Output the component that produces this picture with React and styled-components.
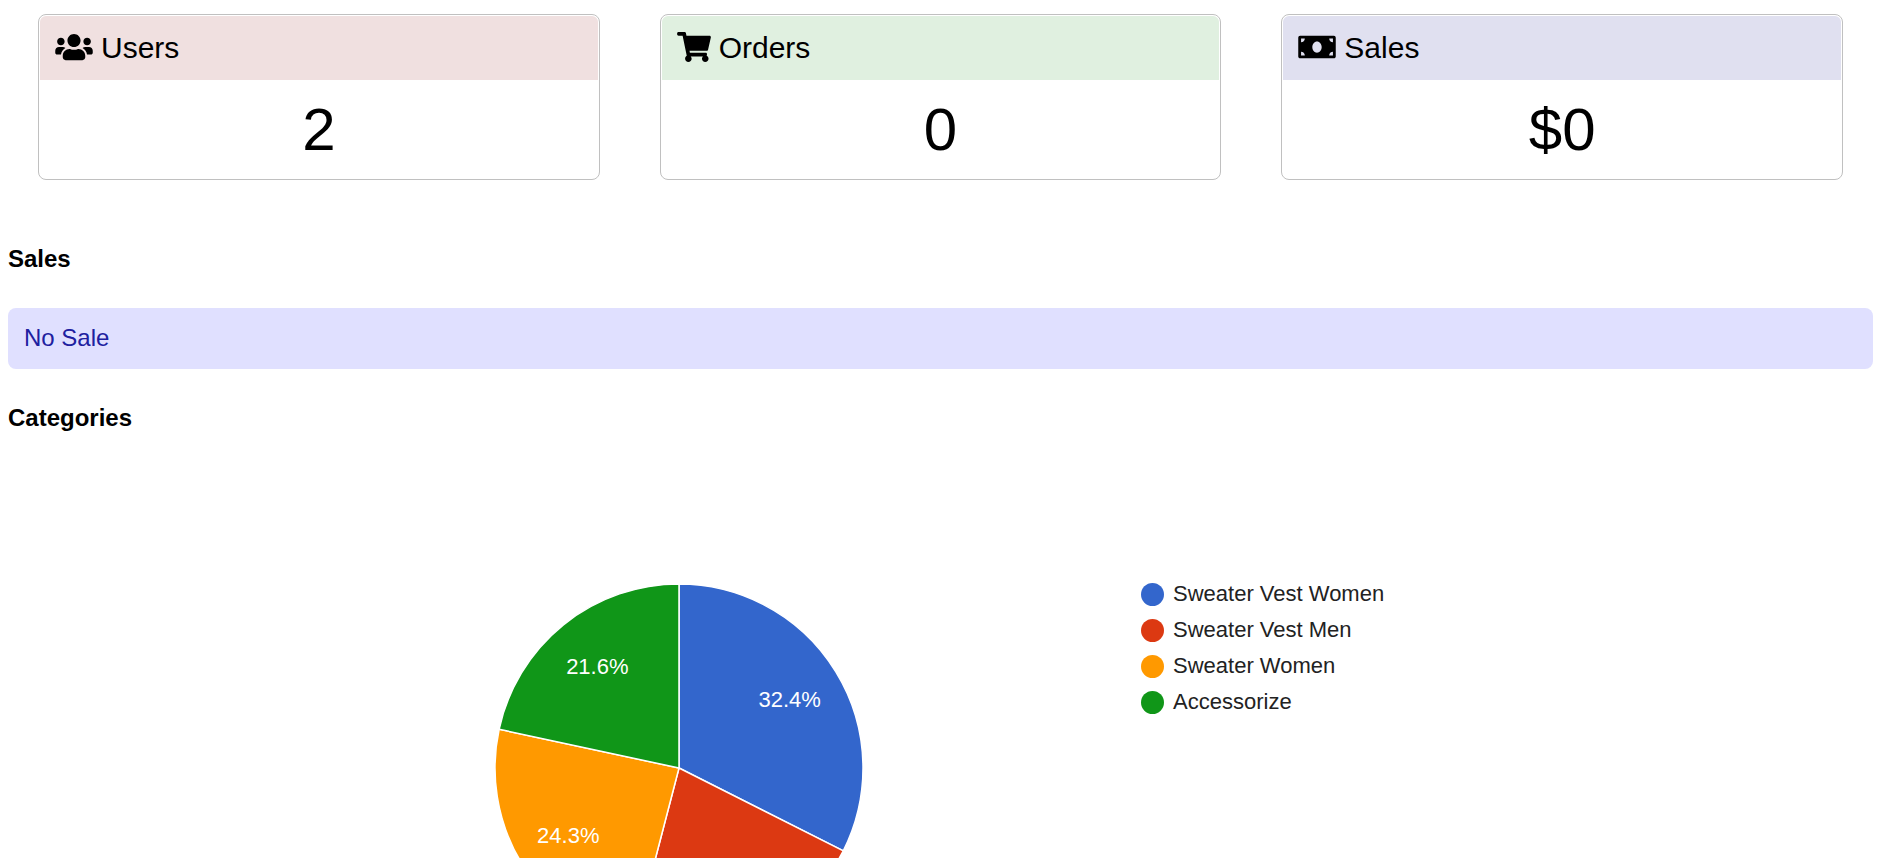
import React from 'react';
import styled, { createGlobalStyle } from 'styled-components';
import { FaUsers, FaShoppingCart, FaMoneyBill } from 'react-icons/fa';

const GlobalStyle = createGlobalStyle`
  body {
    margin: 0;
    background: #ffffff;
    color: #000000;
    font-family: "Liberation Sans", Arial, Helvetica, sans-serif;
    font-size: 24px;
  }
`;

const Dashboard = styled.main`
  padding: 14px 14px 0 8px;
`;

const Summary = styled.ul`
  display: flex;
  gap: 60px;
  margin: 0;
  padding: 0 30px 30px;
  list-style: none;
`;

const Card = styled.li`
  flex: 1;
  padding: 1px;
  border: 1px solid #c0c0c0;
  border-radius: 8px;
`;

const CardTitle = styled.div`
  display: flex;
  align-items: center;
  gap: 8px;
  padding: 15px;
  border-radius: 6px 6px 0 0;
  background: ${({ $tint }) => $tint};
  font-size: 30px;
  line-height: 34px;

  svg {
    width: ${({ $iconWidth }) => $iconWidth}px;
    height: 30px;
    margin-bottom: 2px;
  }
`;

const CardValue = styled.div`
  padding: 16px 15px 14px;
  font-size: 60px;
  line-height: 68px;
  text-align: center;
`;

const SectionTitle = styled.h2`
  margin: 35px 0;
  font-size: 24px;
  line-height: 28px;
`;

const MessageBox = styled.div`
  padding: 16px 16px 17px;
  border-radius: 8px;
  background: #e0e0ff;
  color: #2020a0;
  line-height: 28px;
`;

const Chart = styled.div`
  display: grid;
  grid-template-columns: 5fr 3fr;
  column-gap: 146px;
  padding: 115px 18% 115px 19%;
  padding-right: calc(19% - 2px);
`;

const Pie = styled.svg`
  justify-self: center;
  width: 372px;
  height: 372px;
`;

const Slice = styled.path`
  stroke: #ffffff;
  stroke-width: 1.5;
`;

const SliceLabel = styled.text`
  fill: #ffffff;
  font-size: 22px;
  text-anchor: middle;
`;

const Legend = styled.ul`
  display: flex;
  flex-direction: column;
  gap: 12px;
  margin: 0;
  padding: 0;
  list-style: none;
`;

const LegendItem = styled.li`
  display: flex;
  align-items: center;
  gap: 9px;
  color: #222222;
  font-size: 22px;
  line-height: 24px;
  white-space: nowrap;

  &::before {
    content: "";
    width: 23px;
    height: 23px;
    border-radius: 50%;
    background: ${({ $color }) => $color};
  }
`;

const cards = [
  { title: 'Users', value: '2', tint: '#f0e0e0', Icon: FaUsers, iconWidth: 38 },
  { title: 'Orders', value: '0', tint: '#e0f0e0', Icon: FaShoppingCart, iconWidth: 34 },
  { title: 'Sales', value: '$0', tint: '#e0e0f0', Icon: FaMoneyBill, iconWidth: 38 },
];

const categories = [
  { name: 'Sweater Vest Women', count: 12, color: '#3366cc' },
  { name: 'Sweater Vest Men', count: 8, color: '#dc3912' },
  { name: 'Sweater Women', count: 9, color: '#ff9900' },
  { name: 'Accessorize', count: 8, color: '#109618' },
];

const CENTER = 186;
const RADIUS = 184;
const LABEL_RADIUS = 130;

const pointAt = (fraction, radius) => {
  const angle = fraction * 2 * Math.PI;
  return [CENTER + radius * Math.sin(angle), CENTER - radius * Math.cos(angle)];
};

function PieChart({ data }) {
  const total = data.reduce((sum, item) => sum + item.count, 0);
  let passed = 0;
  const slices = data.map((item) => {
    const share = item.count / total;
    const start = pointAt(passed, RADIUS);
    const end = pointAt(passed + share, RADIUS);
    const label = pointAt(passed + share / 2, LABEL_RADIUS);
    passed += share;
    return { ...item, share, start, end, label };
  });

  return (
    <Chart>
      <Pie viewBox="0 0 372 372" role="img" aria-label="Categories">
        {slices.map(({ name, color, share, start, end }) => (
          <Slice
            key={name}
            fill={color}
            d={`M${CENTER} ${CENTER}L${start.join(' ')}A${RADIUS} ${RADIUS} 0 ${share > 0.5 ? 1 : 0} 1 ${end.join(' ')}Z`}
          />
        ))}
        {slices.map(({ name, share, label }) => (
          <SliceLabel key={name} x={label[0]} y={label[1] + 7}>
            {`${(share * 100).toFixed(1)}%`}
          </SliceLabel>
        ))}
      </Pie>
      <Legend>
        {data.map(({ name, color }) => (
          <LegendItem key={name} $color={color}>{name}</LegendItem>
        ))}
      </Legend>
    </Chart>
  );
}

export default function App() {
  return (
    <>
      <GlobalStyle />
      <Dashboard>
        <Summary>
          {cards.map(({ title, value, tint, Icon, iconWidth }) => (
            <Card key={title}>
              <CardTitle $tint={tint} $iconWidth={iconWidth}>
                <Icon aria-hidden="true" />
                {title}
              </CardTitle>
              <CardValue>{value}</CardValue>
            </Card>
          ))}
        </Summary>
        <SectionTitle>Sales</SectionTitle>
        <MessageBox>No Sale</MessageBox>
        <SectionTitle>Categories</SectionTitle>
        <PieChart data={categories} />
      </Dashboard>
    </>
  );
}
